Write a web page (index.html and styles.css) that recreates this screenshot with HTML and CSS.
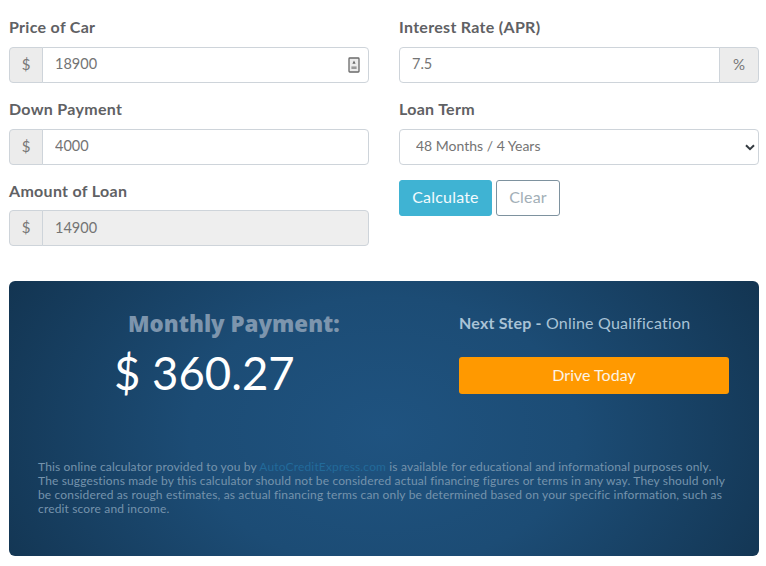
FILE: index.html
```html
<!DOCTYPE html>
<html lang="en">
<head>
<meta charset="utf-8">
<title>Auto Loan Calculator</title>
<link rel="stylesheet" href="styles.css">
</head>
<body>
<main class="page">
  <form class="form-grid">
    <div class="col">
      <div class="group">
        <label class="label">Price of Car</label>
        <div class="input-group">
          <span class="addon addon-left">$</span>
          <input class="control" type="text" value="18900">
          <svg class="field-icon" width="12" height="16" viewBox="0 0 12 16" aria-hidden="true">
            <rect x="1" y="1" width="10" height="14" rx="0.8" fill="#ececec" stroke="#6a6a6a" stroke-width="1.3"/>
            <path d="M6 3.4 7.6 6.8H4.4Z" fill="#6a6a6a"/>
            <rect x="3.4" y="9.4" width="5.2" height="2.6" fill="#9a9a9a"/>
          </svg>
        </div>
      </div>
      <div class="group">
        <label class="label">Down Payment</label>
        <div class="input-group">
          <span class="addon addon-left">$</span>
          <input class="control" type="text" value="4000">
        </div>
      </div>
      <div class="group">
        <label class="label">Amount of Loan</label>
        <div class="input-group">
          <span class="addon addon-left">$</span>
          <input class="control control-off" type="text" value="14900" readonly>
        </div>
      </div>
    </div>
    <div class="col">
      <div class="group">
        <label class="label">Interest Rate (APR)</label>
        <div class="input-group">
          <input class="control control-rate" type="text" value="7.5">
          <span class="addon addon-right">%</span>
        </div>
      </div>
      <div class="group">
        <label class="label">Loan Term</label>
        <div class="select-wrap">
          <select class="select">
            <option>48 Months / 4 Years</option>
          </select>
          <svg class="chevron" width="10" height="7" viewBox="0 0 10 7" aria-hidden="true">
            <path d="M1 1.2 5 5.2 9 1.2" fill="none" stroke="#343a40" stroke-width="2"/>
          </svg>
        </div>
      </div>
      <div class="actions">
        <button class="btn btn-calc" type="button">Calculate</button>
        <button class="btn btn-clear" type="button">Clear</button>
      </div>
    </div>
  </form>

  <section class="result">
    <div class="result-top">
      <div class="pay">
        <h2 class="pay-title">Monthly Payment:</h2>
        <div class="pay-amount">$ 360.27</div>
      </div>
      <div class="next">
        <p class="next-text"><strong>Next Step -</strong> Online Qualification</p>
        <a class="drive" href="#">Drive Today</a>
      </div>
    </div>
    <p class="disclaimer">This online calculator provided to you by <a class="disclaimer-link" href="#">AutoCreditExpress.com</a> is available for educational and informational purposes only. The suggestions made by this calculator should not be considered actual financing figures or terms in any way. They should only be considered as rough estimates, as actual financing terms can only be determined based on your specific information, such as credit score and income.</p>
  </section>
</main>
</body>
</html>
```

FILE: styles.css
```css
* { box-sizing: border-box; }

html, body { margin: 0; background: #fff; }

body {
  font-family: "Lato", "Open Sans", sans-serif;
  color: #5f6266;
  overflow: hidden;
}

.page { padding: 15.4px 7px 0 9px; }

.form-grid {
  display: grid;
  grid-template-columns: 360px 360px;
  column-gap: 30px;
  height: 265.6px;
}

.group { height: 81.6px; }

.label {
  display: block;
  height: 31.6px;
  font-size: 16px;
  line-height: 24px;
  font-weight: 700;
  color: #5f6164;
  letter-spacing: 0.3px;
}

.input-group {
  position: relative;
  display: flex;
  height: 36px;
}

.addon {
  display: flex;
  align-items: center;
  justify-content: center;
  flex: none;
  padding-bottom: 2px;
  background: #ececec;
  border: 1px solid #ced4da;
  font-size: 15px;
  color: #777;
}

.addon-left {
  width: 34px;
  border-radius: 4px 0 0 4px;
}

.addon-right {
  width: 40px;
  margin-left: -1px;
  border-radius: 0 4px 4px 0;
}

.control {
  flex: 1;
  min-width: 0;
  height: 36px;
  padding: 0 12px 2px;
  font: 400 14.5px "Lato", sans-serif;
  color: #747474;
  background: #fff;
  border: 1px solid #ced4da;
  border-radius: 0 4px 4px 0;
  margin-left: -1px;
  outline: none;
}

.control-off { background: #eee; }

.control-rate {
  margin-left: 0;
  border-radius: 4px 0 0 4px;
}

.field-icon {
  position: absolute;
  right: 9px;
  top: 10px;
}

.select-wrap { position: relative; height: 36px; }

.select {
  display: block;
  width: 100%;
  height: 36px;
  padding: 0 12px 2px 16px;
  font: 400 14px "Lato", sans-serif;
  color: #747474;
  background: #fff;
  border: 1px solid #ced4da;
  border-radius: 4px;
  appearance: none;
  outline: none;
}

.chevron {
  position: absolute;
  right: 4px;
  top: 15px;
  pointer-events: none;
}

.actions {
  display: flex;
  gap: 4px;
  margin-top: 1px;
}

.btn {
  height: 36px;
  padding: 0 0 2px;
  font: 400 16px "Lato", sans-serif;
  letter-spacing: 0.2px;
  border-radius: 3px;
}

.btn-calc {
  width: 93px;
  color: #f2fafd;
  background: #3fb3d3;
  border: 1px solid #3fb3d3;
}

.btn-clear {
  width: 64px;
  color: #a3afb7;
  background: #fff;
  border: 1px solid #7e929f;
}

.result {
  height: 275px;
  padding: 29px 30px 0 29px;
  border-radius: 6px;
  background: radial-gradient(ellipse 430px 300px at 50% 55%, #1f5380 0%, #1c4c75 45%, #133552 100%);
}

.result-top {
  display: grid;
  grid-template-columns: 1fr 270px;
  height: 150px;
}

.pay { padding-left: 76px; }

.pay-title {
  margin: 0 0 0 14px;
  font-family: "Open Sans", sans-serif;
  font-size: 22.3px;
  line-height: 28px;
  font-weight: 800;
  white-space: nowrap;
  color: #7d95ad;
}

.pay-amount {
  margin-top: 7px;
  font-size: 45.5px;
  line-height: 56px;
  font-weight: 400;
  color: #fff;
}

.next-text {
  margin: 0;
  height: 47px;
  padding-top: 3px;
  font-size: 16px;
  line-height: 20px;
  color: #a9c3d6;
  letter-spacing: 0.2px;
}

.next-text strong { font-weight: 700; }

.drive {
  display: flex;
  align-items: center;
  justify-content: center;
  height: 37px;
  padding-bottom: 2px;
  font-size: 16px;
  color: #fbf3e6;
  background: #ff9900;
  border-radius: 3px;
  text-decoration: none;
}

.disclaimer {
  margin: 0;
  font-size: 12px;
  line-height: 14px;
  letter-spacing: 0.15px;
  color: #7593ac;
}

.disclaimer-link {
  color: #226a9a;
  text-decoration: none;
}
```
